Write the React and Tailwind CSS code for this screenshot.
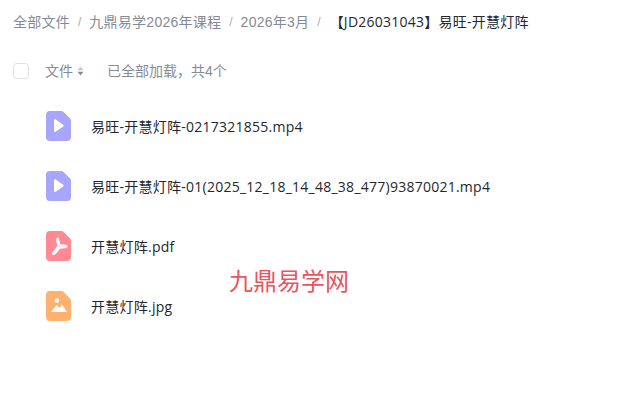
import React from 'react';

const FILE_SHAPE = 'M4 0h11.500a3 3 0 0 1 2.100 .9l6.500 6.600a3 3 0 0 1 .9 2.100V26a4 4 0 0 1-4 4H4a4 4 0 0 1-4-4V4a4 4 0 0 1 4-4z';

const PlayIcon = () => (
    <svg width="25" height="30" viewBox="0 0 25 30" className="-mt-[2px]">
        <path d={FILE_SHAPE} fill="#a8a5fd" />
        <path d="M8 9.200v10.600c0 .9 1 1.400 1.700 .9l7.500-5.300c.6-.4 .6-1.300 0-1.700l-7.500-5.300c-.7-.5-1.700 0-1.700 .8z" fill="#fff" />
    </svg>
);

const PdfIcon = () => (
    <svg width="25" height="30" viewBox="0 0 25 30" className="-mt-[2px]">
        <path d={FILE_SHAPE} fill="#ff8a94" />
        <path d="M11.800 7.500c-1 0-1 2.700 .7 6.700c-1.500 3.400-3 5.700-5 7.200c-1.300 1-.5 2.200 .9 1.300c2-1.400 3.200-3 4.700-5.700c2.500-.8 4.200-1 6.200-.8c1.400 .1 1.700-1.200 .3-1.600c-2-.5-4.100-.4-5.700 0c-1.500-2.800-1.400-7.100-2.100-7.100z" fill="none" stroke="#fff" strokeWidth="2" strokeLinejoin="round" />
    </svg>
);

const ImageIcon = () => (
    <svg width="25" height="30" viewBox="0 0 25 30" className="-mt-[2px]">
        <path d={FILE_SHAPE} fill="#ffb26f" />
        <circle cx="11" cy="9.500" r="2.300" fill="#fff" />
        <path d="M5 21l5.500-7l3 3l2.500-3.500l5 7.500z" fill="#fff" />
    </svg>
);

const files = [
    { name: '易旺-开慧灯阵-0217321855.mp4', Icon: PlayIcon },
    { name: '易旺-开慧灯阵-01(2025_12_18_14_48_38_477)93870021.mp4', Icon: PlayIcon },
    { name: '开慧灯阵.pdf', Icon: PdfIcon },
    { name: '开慧灯阵.jpg', Icon: ImageIcon },
];

const crumbs = ['全部文件', '九鼎易学2026年课程', '2026年3月'];

export default function App() {
    return (
        <div className="relative h-[410px] w-[640px] overflow-hidden bg-white text-sm font-['Liberation_Sans','Noto_Sans_CJK_SC',sans-serif]">
            {/* Breadcrumb */}
            <div className="flex h-[44px] items-center pl-[13px] text-[#858b96]">
                {crumbs.map((c) => (
                    <React.Fragment key={c}>
                        <span className="tracking-[0.25px]">{c}</span>
                        <span className="mx-2 text-xs text-[#a5a9b2]">/</span>
                    </React.Fragment>
                ))}
                <span className="ml-px font-['Open_Sans','Noto_Sans_CJK_SC',sans-serif] tracking-[0.25px] text-[#25272d]">【JD26031043】易旺-开慧灯阵</span>
            </div>

            {/* Header row */}
            <div className="mt-[18px] flex h-[17px] items-center pl-[13px] text-[#858b96]">
                <div className="h-4 w-4 rounded-[4px] border border-[#dfe1e5]" />
                <span className="ml-4">文件</span>
                <svg className="ml-1" width="7" height="10" viewBox="0 0 7 10">
                    <path d="M3.500 .5L6.500 4.200H.5z" fill="#c4c7cd" />
                    <path d="M3.500 9.500L.5 5.800h6z" fill="#858b96" />
                </svg>
                <span className="ml-[23px]">已全部加载，共4个</span>
            </div>

            {/* File list */}
            <div className="mt-[18px] flex flex-col pl-[46px] font-['Open_Sans','Noto_Sans_CJK_SC',sans-serif] tracking-[0.25px]">
                {files.map(({ name, Icon }) => (
                    <div key={name} className="flex h-[60px] items-center gap-5 text-[#25272d]">
                        <Icon />
                        <span>{name}</span>
                    </div>
                ))}
            </div>

            {/* Watermark */}
            <div className="absolute left-[229px] top-[266px] text-2xl text-[#e8555f]">九鼎易学网</div>
        </div>
    );
}
